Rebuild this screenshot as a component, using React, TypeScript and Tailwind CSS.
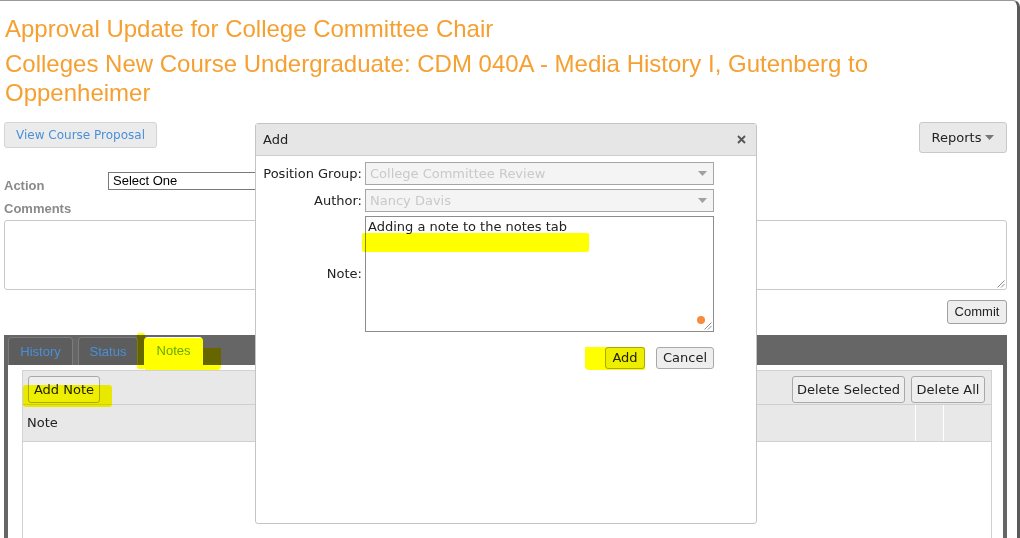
import React from "react";

const ARIAL = "font-['Liberation_Sans',Arial,sans-serif]";
const VERDANA = "font-['DejaVu_Sans',Verdana,sans-serif]";

function Caret({ className }: { className?: string }) {
  return (
    <svg width="9" height="5" viewBox="0 0 9 5" className={className}>
      <path d="M0 0h9L4.5 5z" fill="currentColor" />
    </svg>
  );
}

function ResizeGrip() {
  return (
    <svg width="9" height="9" viewBox="0 0 9 9" className="absolute bottom-[1px] right-[1px] text-[#8a8a8a]">
      <path d="M8.5 1.5l-7 7M8.5 5l-3.5 3.5" stroke="currentColor" strokeWidth="1" fill="none" />
    </svg>
  );
}

function GrayButton({ children, className = "" }: { children: React.ReactNode; className?: string }) {
  return (
    <button
      className={`flex items-center justify-center rounded-[3px] border border-[#a9a9a9] bg-[#eeeeee] text-[13px] text-[#222] ${VERDANA} ${className}`}
    >
      {children}
    </button>
  );
}

function DisabledSelect({ value }: { value: string }) {
  return (
    <div className="flex h-[23px] items-center justify-between border border-[#a6a6a6] bg-[#f4f4f4] pl-[4px] pr-[6px]">
      <span className={`text-[13px] text-[#c9c9c9] ${VERDANA}`}>{value}</span>
      <Caret className="text-[#a0a0a0]" />
    </div>
  );
}

function AddDialog() {
  return (
    <div className="absolute left-[255px] top-[123px] z-10 flex h-[401px] w-[502px] flex-col rounded-[3px] border border-[#c4c4c4] bg-white">
      <div className="flex h-[32px] items-center justify-between border-b border-[#cdcdcd] bg-[#e6e6e6] pl-[7px] pr-[10px]">
        <span className={`text-[13px] text-[#222] ${VERDANA}`}>Add</span>
        <svg width="9" height="9" viewBox="0 0 9 9" className="text-[#555]">
          <path d="M1 1l7 7M8 1l-7 7" stroke="currentColor" strokeWidth="1.8" />
        </svg>
      </div>
      <div className="pl-[6px] pt-[6px]">
        <div className={`grid grid-cols-[100px_349px] items-center gap-x-[3px] gap-y-[4px] text-[13px] text-[#222] ${VERDANA}`}>
          <span className="text-right">Position Group:</span>
          <DisabledSelect value="College Committee Review" />
          <span className="text-right">Author:</span>
          <DisabledSelect value="Nancy Davis" />
          <span className="text-right">Note:</span>
          <div className="relative h-[116px] border border-[#8c8c8c] bg-white pl-[2px] pt-[2px] leading-[16px]">
            Adding a note to the notes tab
            <span className="absolute bottom-[7px] right-[8px] h-[8px] w-[8px] rounded-full bg-[#f58d3d]" />
            <ResizeGrip />
          </div>
        </div>
        <div className="mt-[15px] flex w-[452px] justify-end gap-[11px]">
          <GrayButton className="h-[22px] w-[40px] border-[#8a8a8a]">Add</GrayButton>
          <GrayButton className="h-[22px] w-[58px] border-[#8a8a8a]">Cancel</GrayButton>
        </div>
      </div>
    </div>
  );
}

function Highlights() {
  const hl = "pointer-events-none absolute z-20 bg-[#ffff00] mix-blend-multiply";
  return (
    <>
      {/* note text */}
      <div className={`${hl} left-[362px] top-[233px] h-[19px] w-[227px] rounded-[2px]`} />
      {/* dialog Add button */}
      <div className={`${hl} left-[585px] top-[347px] h-[23px] w-[60px] rounded-bl-[4px]`} />
      {/* Notes tab */}
      <div className={`${hl} left-[137px] top-[333px] h-[36px] w-[8px] rounded-[2px]`} />
      <div className={`${hl} left-[145px] top-[338px] h-[32px] w-[58px]`} />
      <div className={`${hl} left-[203px] top-[348px] h-[22px] w-[18px] rounded-br-[4px]`} />
      {/* Add Note */}
      <div className={`${hl} left-[23px] top-[385px] h-[22px] w-[89px] rounded-[3px]`} />
    </>
  );
}

export default function App() {
  return (
    <div className="relative h-[538px] w-[1020px] overflow-hidden bg-white">
      <div className="flex h-full flex-col rounded-tr-[7px] border-r-[3px] border-t border-r-[#5a5a5a] border-t-[#9a9a9a] pl-[4px] pr-[10px]">
        <h1 className={`pl-[1px] pt-[13px] text-[24px] leading-[29px] text-[#f5a031] ${ARIAL}`}>
          Approval Update for College Committee Chair
        </h1>
        <h2 className={`mt-[6px] pl-[1px] text-[24px] leading-[29px] text-[#f5a031] ${ARIAL}`}>
          Colleges New Course Undergraduate: CDM 040A - Media History I, Gutenberg to
          <br />
          Oppenheimer
        </h2>

        <div className="mt-[15px] flex items-start justify-between">
          <button
            className={`h-[26px] w-[153px] rounded-[3px] border border-[#d4d4d4] bg-[#ebebeb] text-[12px] text-[#4a90d9] ${VERDANA}`}
          >
            View Course Proposal
          </button>
          <button
            className={`flex h-[31px] w-[88px] items-center justify-center gap-[4px] rounded-[3px] border border-[#c9c9c9] bg-[#e9e9e9] text-[13px] text-[#222] ${VERDANA}`}
          >
            Reports
            <Caret className="text-[#777]" />
          </button>
        </div>

        <div className={`mt-[19px] flex items-start text-[13px] ${ARIAL}`}>
          <div className="w-[104px] pt-[6px] font-bold leading-[16px] text-[#8a8a8a]">Action</div>
          <div className="h-[18px] w-[300px] border border-[#7a7a7a] pl-[4px] leading-[16px] text-black">
            Select One
          </div>
        </div>
        <div className={`mt-[7px] text-[13px] font-bold leading-[16px] text-[#8a8a8a] ${ARIAL}`}>Comments</div>
        <div className="relative mt-[3px] h-[70px] rounded-[3px] border border-[#c9c9c9] bg-white">
          <ResizeGrip />
        </div>

        <div className="mt-[10px] flex justify-end">
          <button
            className={`h-[24px] w-[60px] rounded-[3px] border border-[#a0a0a0] bg-[#eeeeee] text-[13px] text-[#222] ${ARIAL}`}
          >
            Commit
          </button>
        </div>

        <div className="mt-[11px] flex flex-1 flex-col bg-[#666666] px-[4px] pt-[2px]">
          <div className={`flex h-[28px] items-stretch text-[13px] ${ARIAL}`}>
            <div className="flex w-[65px] items-center justify-center rounded-t-[4px] border border-b-0 border-[#7c7c7c] bg-[#5d5d5d] text-[#4b8fd6]">
              History
            </div>
            <div className="ml-[5px] flex w-[60px] items-center justify-center rounded-t-[4px] border border-b-0 border-[#7c7c7c] bg-[#5d5d5d] text-[#4b8fd6]">
              Status
            </div>
            <div className="ml-[6px] flex w-[59px] items-center justify-center rounded-t-[4px] bg-white text-[#63ab35]">
              Notes
            </div>
          </div>
          <div className="flex flex-1 flex-col bg-white pl-[14px] pr-[11px] pt-[5px]">
            <div className="flex flex-1 flex-col border-x border-t border-[#d2d2d2]">
              <div className="flex h-[34px] justify-between border-b border-[#cfcfcf] bg-[#e8e8e8] pl-[5px] pr-[6px] pt-[5px]">
                <GrayButton className="h-[27px] w-[72px]">Add Note</GrayButton>
                <div className="flex gap-[6px]">
                  <GrayButton className="h-[27px] w-[113px]">Delete Selected</GrayButton>
                  <GrayButton className="h-[27px] w-[74px]">Delete All</GrayButton>
                </div>
              </div>
              <div className={`flex h-[37px] border-b border-[#d0d0d0] bg-[#e8e8e8] text-[13px] text-[#222] ${VERDANA}`}>
                <div className="flex flex-1 items-center pl-[4px]">Note</div>
                <div className="w-[28px] border-l border-white" />
                <div className="w-[48px] border-l border-white" />
              </div>
              <div className="flex-1 bg-white" />
            </div>
          </div>
        </div>
      </div>

      <AddDialog />
      <Highlights />
    </div>
  );
}
